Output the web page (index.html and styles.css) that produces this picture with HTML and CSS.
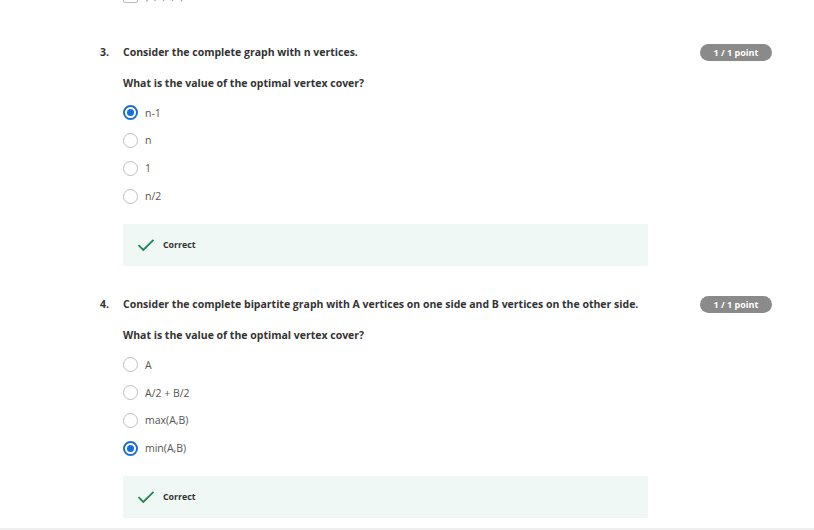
FILE: index.html
```html
<!DOCTYPE html>
<html>
<head>
<meta charset="utf-8">
<link rel="stylesheet" href="styles.css">
</head>
<body>
<div class="page">
  <div class="prev">
    <div class="option"><span class="checkbox"></span><span class="opt-text">(1,2,3,4)</span></div>
  </div>

  <div class="question">
    <div class="num">3.</div>
    <div class="qbody">
      <div class="head">
        <div class="title">Consider the complete graph with n vertices.</div>
        <div class="badge">1 / 1 point</div>
      </div>
      <div class="prompt">What is the value of the optimal vertex cover?</div>
      <div class="options">
        <div class="option"><span class="radio checked"></span><span class="opt-text">n-1</span></div>
        <div class="option"><span class="radio"></span><span class="opt-text">n</span></div>
        <div class="option"><span class="radio"></span><span class="opt-text">1</span></div>
        <div class="option"><span class="radio"></span><span class="opt-text">n/2</span></div>
      </div>
      <div class="feedback">
        <svg class="check" width="18" height="14" viewBox="0 0 18 14"><path d="M1.5 7.2 L6.3 12 L16.5 1.8" fill="none" stroke="#1f8354" stroke-width="1.8"/></svg>
        <span class="fb-text">Correct</span>
      </div>
    </div>
  </div>

  <div class="question">
    <div class="num">4.</div>
    <div class="qbody">
      <div class="head">
        <div class="title">Consider the complete bipartite graph with A vertices on one side and B vertices on the other side.</div>
        <div class="badge">1 / 1 point</div>
      </div>
      <div class="prompt">What is the value of the optimal vertex cover?</div>
      <div class="options">
        <div class="option"><span class="radio"></span><span class="opt-text">A</span></div>
        <div class="option"><span class="radio"></span><span class="opt-text">A/2 + B/2</span></div>
        <div class="option"><span class="radio"></span><span class="opt-text">max(A,B)</span></div>
        <div class="option"><span class="radio checked"></span><span class="opt-text">min(A,B)</span></div>
      </div>
      <div class="feedback">
        <svg class="check" width="18" height="14" viewBox="0 0 18 14"><path d="M1.5 7.2 L6.3 12 L16.5 1.8" fill="none" stroke="#1f8354" stroke-width="1.8"/></svg>
        <span class="fb-text">Correct</span>
      </div>
    </div>
  </div>
</div>
<div class="footer-bar"></div>
</body>
</html>
```

FILE: styles.css
```css
html, body {
  margin: 0;
  padding: 0;
  background: #fff;
  overflow: hidden;
}
body {
  font-family: "Open Sans", "Noto Sans", sans-serif;
  color: #333;
}
.page {
  padding: 0 42px 0 100px;
}
.prev {
  margin-top: -18px;
  padding-left: 23px;
}
.question {
  display: flex;
  margin-top: 30px;
}
.prev + .question {
  margin-top: 34px;
}
.num {
  width: 23px;
  font-size: 10.5px;
  font-weight: 700;
  line-height: 17px;
}
.qbody {
  flex: 1;
}
.head {
  display: flex;
  justify-content: space-between;
  align-items: flex-start;
}
.title {
  font-size: 10.5px;
  font-weight: 700;
  line-height: 17px;
  color: #333;
}
.badge {
  width: 72px;
  height: 17px;
  border-radius: 9px;
  background: #8a8a8a;
  color: #fff;
  font-size: 9px;
  font-weight: 700;
  display: flex;
  align-items: center;
  justify-content: center;
  flex-shrink: 0;
}
.prompt {
  margin-top: 15px;
  font-size: 10.5px;
  font-weight: 700;
  line-height: 14px;
}
.options {
  margin-top: 9px;
}
.option {
  display: flex;
  align-items: center;
  height: 27.8px;
}
.opt-text {
  font-size: 10.5px;
  color: #555;
  margin-left: 7px;
}
.radio, .checkbox {
  box-sizing: border-box;
  width: 15px;
  height: 15px;
  border: 1.5px solid #bdbdbd;
  background: #fff;
  flex-shrink: 0;
}
.radio {
  border-radius: 50%;
  display: flex;
  align-items: center;
  justify-content: center;
}
.checkbox {
  border-radius: 2px;
}
.prev .opt-text {
  color: #666;
}
.radio.checked {
  border: 2px solid #1a6fd0;
}
.radio.checked::after {
  content: "";
  width: 7px;
  height: 7px;
  border-radius: 50%;
  background: #1a6fd0;
}
.feedback {
  margin-top: 14px;
  height: 42px;
  width: 525px;
  background: #eff8f4;
  display: flex;
  align-items: center;
  padding-left: 14px;
  box-sizing: border-box;
}
.check {
  display: block;
}
.fb-text {
  margin-left: 8px;
  font-size: 8.8px;
  font-weight: 700;
  color: #333;
}
.footer-bar {
  margin-top: 10px;
  height: 10px;
  background: #efefef;
}
```
